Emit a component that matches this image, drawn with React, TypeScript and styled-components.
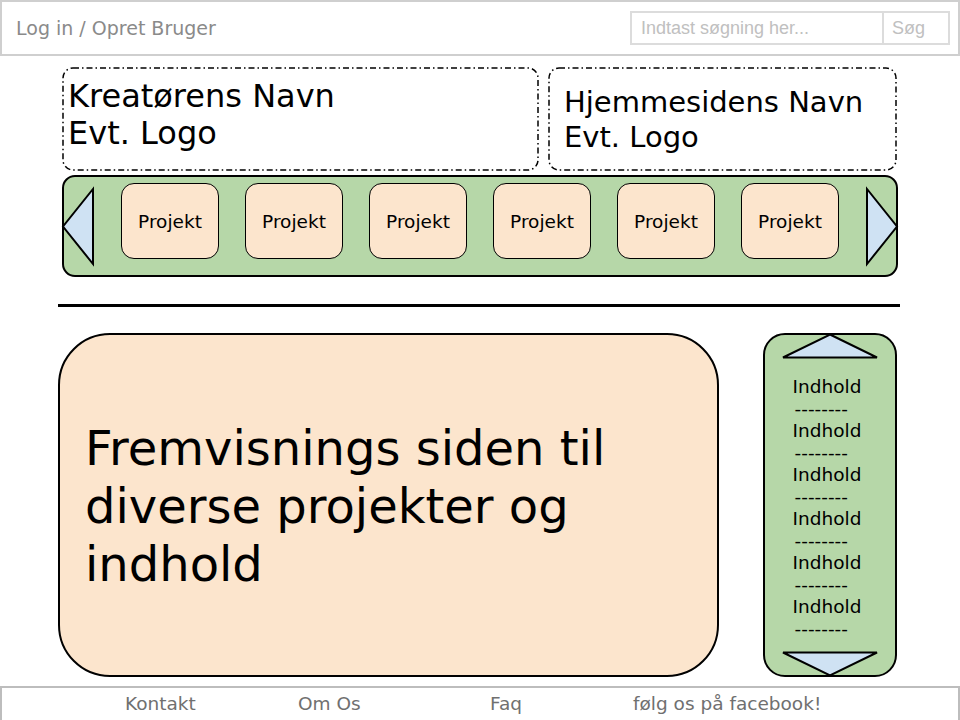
import React from "react";
import styled, { createGlobalStyle } from "styled-components";

const Global = createGlobalStyle`
  html, body { margin: 0; padding: 0; background: #fff; }
  body { width: 960px; height: 720px; overflow: hidden; font-family: "DejaVu Sans", Verdana, sans-serif; }
  * { box-sizing: border-box; }
`;

const GREEN = "#b6d7a8";
const PEACH = "#fce5cd";
const BLUE = "#cfe2f3";

const Page = styled.div`
  width: 960px;
  height: 720px;
  display: flex;
  flex-direction: column;
  overflow: hidden;
  & > * { flex-shrink: 0; }
`;

const TopBar = styled.header`
  height: 56px;
  border: 2px solid #cfcfcf;
  display: flex;
  align-items: center;
  justify-content: space-between;
  padding: 0 8px 0 14px;
`;

const LoginLink = styled.span`
  font-size: 19px;
  color: #8a8a8a;
`;

const SearchBox = styled.div`
  width: 320px;
  height: 34px;
  border: 2px solid #dcdcdc;
  display: flex;
`;

const SearchInput = styled.div`
  flex: 1;
  font-family: "Liberation Sans", Arial, sans-serif;
  font-size: 18px;
  color: #c0c0c0;
  padding-left: 9px;
  line-height: 30px;
`;

const SearchButton = styled.div`
  width: 66px;
  border-left: 2px solid #dcdcdc;
  font-family: "Liberation Sans", Arial, sans-serif;
  font-size: 18px;
  color: #c0c0c0;
  padding-left: 8px;
  line-height: 30px;
`;

const HeaderRow = styled.div`
  display: flex;
  margin-top: 12px;
  padding-left: 63px;
  gap: 11px;
`;

const Frame = styled.div<{ $w: number }>`
  position: relative;
  width: ${(p) => p.$w}px;
  height: 102px;
`;

const FrameLine = styled.svg`
  position: absolute;
  inset: 0;
  width: 100%;
  height: 100%;
  overflow: visible;
  pointer-events: none;
`;

const FrameText = styled.div<{ $size: number; $lh: number; $pl: number; $pt: number }>`
  font-size: ${(p) => p.$size}px;
  line-height: ${(p) => p.$lh}px;
  color: #000;
  padding-left: ${(p) => p.$pl}px;
  padding-top: ${(p) => p.$pt}px;
`;

const DashFrame: React.FC<{ w: number; size: number; lh: number; pl: number; pt: number; lines: string[] }> = ({ w, size, lh, pl, pt, lines }) => (
  <Frame $w={w}>
    <FrameLine>
      <rect x="0" y="0" width="100%" height="100%" rx="10" fill="none" stroke="#000" strokeWidth="1.5" strokeDasharray="6 3 1.5 3" />
    </FrameLine>
    <FrameText $size={size} $lh={lh} $pl={pl} $pt={pt}>
      {lines.map((l) => (
        <div key={l}>{l}</div>
      ))}
    </FrameText>
  </Frame>
);

const Carousel = styled.div`
  margin-top: 5px;
  margin-left: 62px;
  width: 836px;
  height: 102px;
  background: ${GREEN};
  border: 2px solid #000;
  border-radius: 13px;
  display: flex;
  align-items: center;
`;

const ArrowSvg = styled.svg<{ $side: "left" | "right" }>`
  flex: none;
  width: 32px;
  height: 77px;
  margin-left: ${(p) => (p.$side === "left" ? "-2px" : "0")};
  margin-right: ${(p) => (p.$side === "right" ? "-2px" : "0")};
  overflow: visible;
`;

const ProjectList = styled.div`
  flex: 1;
  display: flex;
  gap: 26px;
  align-self: flex-start;
  margin-top: 6px;
  padding: 0 27px;
`;

const ProjectCard = styled.div`
  width: 98px;
  height: 76px;
  background: ${PEACH};
  border: 1.5px solid #000;
  border-radius: 13px;
  display: flex;
  align-items: center;
  justify-content: center;
  font-size: 18.5px;
  color: #000;
`;

const Divider = styled.div`
  margin-top: 27px;
  margin-left: 58px;
  width: 842px;
  height: 3px;
  background: #000;
`;

const MainRow = styled.div`
  display: flex;
  margin-top: 26px;
  height: 344px;
`;

const MainPanel = styled.section`
  margin-left: 58px;
  width: 661px;
  height: 100%;
  background: ${PEACH};
  border: 2px solid #000;
  border-radius: 52px;
  display: flex;
  align-items: center;
  padding-left: 25px;
  padding-top: 2px;
  font-size: 48px;
  line-height: 58px;
  color: #000;
`;

const SidePanel = styled.aside`
  margin-left: 44px;
  width: 134px;
  height: 100%;
  background: ${GREEN};
  border: 2px solid #000;
  border-radius: 22px;
  display: flex;
  flex-direction: column;
  align-items: center;
`;

const VArrow = styled.svg<{ $dir: "up" | "down" }>`
  flex: none;
  width: 96px;
  height: 24px;
  margin-top: ${(p) => (p.$dir === "up" ? "-1px" : "auto")};
  margin-bottom: ${(p) => (p.$dir === "down" ? "-1px" : "0")};
  overflow: visible;
`;

const SideList = styled.div`
  margin-top: 18px;
  margin-right: 6px;
  font-size: 18.5px;
  line-height: 22px;
  color: #000;
  text-align: left;
`;

const Dashes = styled.div`
  padding-left: 2px;
`;

const Footer = styled.footer`
  margin-top: 9px;
  height: 40px;
  border: 2px solid #bdbdbd;
  display: flex;
  padding-left: 123px;
  padding-top: 5px;
`;

const FooterLink = styled.span<{ $w: number }>`
  width: ${(p) => p.$w}px;
  font-size: 18.5px;
  color: #707070;
  white-space: nowrap;
`;

const projects = Array.from({ length: 6 }, () => "Projekt");
const side = Array.from({ length: 6 }, () => "Indhold");

export default function App() {
  return (
    <Page>
      <Global />
      <TopBar>
        <LoginLink>Log in / Opret Bruger</LoginLink>
        <SearchBox>
          <SearchInput>Indtast søgning her...</SearchInput>
          <SearchButton>Søg</SearchButton>
        </SearchBox>
      </TopBar>

      <HeaderRow>
        <DashFrame w={475} size={32} lh={36.5} pl={5} pt={10} lines={["Kreatørens Navn", "Evt. Logo"]} />
        <DashFrame w={347} size={29} lh={35} pl={15} pt={17} lines={["Hjemmesidens Navn", "Evt. Logo"]} />
      </HeaderRow>

      <Carousel>
        <ArrowSvg $side="left" viewBox="0 0 32 77">
          <polygon points="31,1 31,76 1,38.5" fill={BLUE} stroke="#000" strokeWidth="2" strokeLinejoin="miter" />
        </ArrowSvg>
        <ProjectList>
          {projects.map((p, i) => (
            <ProjectCard key={i}>{p}</ProjectCard>
          ))}
        </ProjectList>
        <ArrowSvg $side="right" viewBox="0 0 32 77">
          <polygon points="1,1 1,76 31,38.5" fill={BLUE} stroke="#000" strokeWidth="2" strokeLinejoin="miter" />
        </ArrowSvg>
      </Carousel>

      <Divider />

      <MainRow>
        <MainPanel>
          <div>
            Fremvisnings siden til
            <br />
            diverse projekter og
            <br />
            indhold
          </div>
        </MainPanel>
        <SidePanel>
          <VArrow $dir="up" viewBox="0 0 96 24">
            <polygon points="48,0.5 95,23.5 1,23.5" fill={BLUE} stroke="#000" strokeWidth="2" />
          </VArrow>
          <SideList>
            {side.map((s, i) => (
              <React.Fragment key={i}>
                <div>{s}</div>
                <Dashes>--------</Dashes>
              </React.Fragment>
            ))}
          </SideList>
          <VArrow $dir="down" viewBox="0 0 96 24">
            <polygon points="1,0.5 95,0.5 48,23.5" fill={BLUE} stroke="#000" strokeWidth="2" />
          </VArrow>
        </SidePanel>
      </MainRow>

      <Footer>
        <FooterLink $w={173}>Kontakt</FooterLink>
        <FooterLink $w={192}>Om Os</FooterLink>
        <FooterLink $w={143}>Faq</FooterLink>
        <FooterLink $w={200}>følg os på facebook!</FooterLink>
      </Footer>
    </Page>
  );
}
